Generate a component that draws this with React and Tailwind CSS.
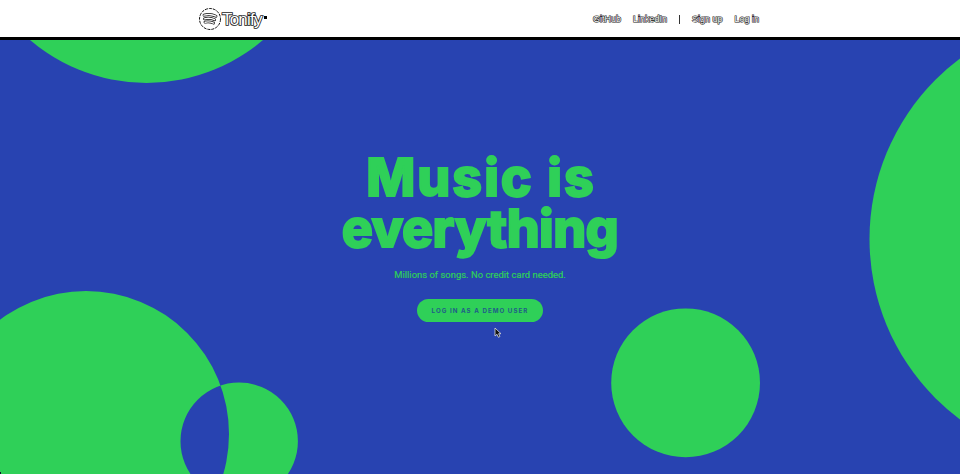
const circles = [
  { cx: 146.5, cy: -136.3, r: 179.3 },
  { cx: 1094.7, cy: 199, r: 225.2 },
  { cx: 685.6, cy: 342.8, r: 74.4 },
];

function Outlined({ children, className = "" }) {
  return (
    <span
      className={
        "whitespace-nowrap font-['Liberation_Sans',sans-serif] text-white [paint-order:stroke_fill] " + className
      }
    >
      {children}
    </span>
  );
}

function NavLink({ children, className = "" }) {
  return <Outlined className={"[-webkit-text-stroke:1.2px_#222] " + className}>{children}</Outlined>;
}

function Logo() {
  return (
    <div className="flex h-[24px] items-center pt-px">
      <svg width="24" height="24" viewBox="0 0 24 24" fill="none" stroke="#111">
        <circle cx="12" cy="12" r="10.5" strokeWidth="1" strokeDasharray="3 1" />
        <path d="M6 8.2c4.2-1.2 8.4-.8 12 1M6.5 11.8c3.6-1 7-.6 10.2.9M7 15.2c3-.7 5.8-.4 8.5.9" strokeWidth="2.8" strokeLinecap="round" />
        <path d="M6 8.2c4.2-1.2 8.4-.8 12 1M6.5 11.8c3.6-1 7-.6 10.2.9M7 15.2c3-.7 5.8-.4 8.5.9" stroke="#fff" strokeWidth="1.4" strokeLinecap="round" />
      </svg>
      <Outlined className="text-[17px] leading-none tracking-[-0.8px] [-webkit-text-stroke:1.7px_#222]">Tonify</Outlined>
      <span className="mb-1 ml-0.5 h-[3px] w-[3px] bg-black" />
    </div>
  );
}

export default function App() {
  return (
    <div className="flex h-[474px] w-[960px] flex-col overflow-hidden bg-[#2843b1]">
      <header className="flex h-[40px] shrink-0 items-center justify-between border-b-[3px] border-black bg-white pl-[198px] pr-[201px]">
        <Logo />
        <nav className="flex items-center pt-[2px] text-[9px]">
          <NavLink>GitHub</NavLink>
          <NavLink className="ml-3">LinkedIn</NavLink>
          <span className="mx-3 h-[9px] w-px bg-[#333]" />
          <NavLink>Sign up</NavLink>
          <NavLink className="ml-3">Log in</NavLink>
        </nav>
      </header>
      <main className="relative flex h-[434px] flex-col items-center">
        <svg className="absolute inset-0" width="960" height="434" fill="#2fd058">
          {circles.map((c) => (
            <circle key={c.cx} {...c} />
          ))}
          <path
            fillRule="evenodd"
            d="M-57 394a143 143 0 1 0 286 0a143 143 0 1 0-286 0zM180.5 401.2a58.7 58.7 0 1 0 117.4 0a58.7 58.7 0 1 0-117.4 0z"
          />
        </svg>
        <h1 className="relative mt-[113px] text-center font-['Inter',sans-serif] text-[52px] font-extrabold leading-[50.5px] text-[#2fd058] [-webkit-text-stroke:1.8px_#2fd058]">
          <span className="block pl-[2px] tracking-[2px]">Music is</span>
          <span className="block tracking-[-0.6px]">everything</span>
        </h1>
        <p className="relative mt-[14px] font-['Roboto',sans-serif] text-[9.4px] leading-[14px] tracking-[0.03px] text-[#2fd058] [-webkit-text-stroke:0.2px_#2fd058]">
          Millions of songs. No credit card needed.
        </p>
        <button className="relative mt-[17px] h-[23px] w-[126px] rounded-full bg-[#2fd058] font-['Inter',sans-serif] text-[6.2px] font-bold tracking-[1.05px] text-[#205d88]">
          LOG IN AS A DEMO USER
        </button>
        <svg className="absolute left-[494px] top-[287px]" width="8" height="12" viewBox="0 0 8 12">
          <path d="M1 1v8l2-1.7 1.4 3 1.5-.7-1.3-2.9H7z" fill="#111" stroke="#ddd" strokeWidth=".8" />
        </svg>
        <span className="absolute bottom-0 left-0 h-[2px] w-px bg-[#0b1a28]" />
      </main>
    </div>
  );
}
